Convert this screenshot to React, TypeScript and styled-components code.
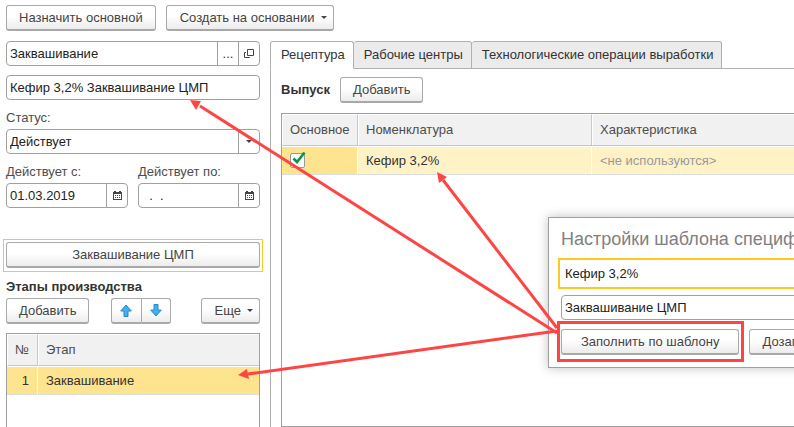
import React from 'react';
import styled, { createGlobalStyle, css } from 'styled-components';

const GlobalStyle = createGlobalStyle`
  *, *::before, *::after { box-sizing: border-box; }
  body {
    margin: 0;
    background: #fff;
    color: #333;
    font: 13px/16px "Liberation Sans", Arial, sans-serif;
  }
  button, input, select { font: inherit; color: inherit; margin: 0; }
`;

const line = '#a0a0a0';

const Page = styled.main`
  position: relative;
  display: flex;
  flex-direction: column;
  gap: 10px;
  min-height: 100vh;
  padding-top: 5px;
  overflow: hidden;
`;

const CommandBar = styled.div`
  display: flex;
  gap: 10px;
  padding-left: 6px;
`;

const Button = styled.button<{ $wide?: boolean; $menu?: boolean }>`
  display: inline-flex;
  align-items: center;
  justify-content: center;
  gap: 6px;
  height: 26px;
  padding: ${(p) => (p.$menu ? '0 6px 0 13px' : '0 12px')};
  width: ${(p) => (p.$wide ? '100%' : 'auto')};
  border: 1px solid #aaa;
  border-bottom: 2px solid #a8a8a8;
  border-radius: 3px;
  background: linear-gradient(#fff 45%, #ececec);
  color: #444;
  white-space: nowrap;
`;

const Caret = styled.span`
  border: 3px solid transparent;
  border-top-color: #444;
  border-bottom: 0;
`;

const Columns = styled.div`
  flex: 1;
  display: flex;
  gap: 10px;
  padding-left: 6px;
`;

const Side = styled.section`
  flex: 0 0 254px;
  display: flex;
  flex-direction: column;
`;

const Fields = styled.div`
  display: flex;
  flex-direction: column;
  gap: 9px;
`;

const Field = styled.div<{ $active?: boolean }>`
  display: flex;
  height: 25px;
  border: 1px solid ${line};
  border-radius: 4px;
  background: #fff;
  overflow: hidden;
  ${(p) =>
    p.$active &&
    css`
      height: 31px;
      margin-left: -3px;
      border: 2px solid #fbc91f;
      border-radius: 0;
      padding-left: 2px;
    `}
`;

const inputText = css`
  flex: 1;
  min-width: 0;
  width: 100%;
  padding: 0 3px;
  border: 0;
  background: transparent;
  color: #222;
  outline: 0;
`;

const Input = styled.input`
  ${inputText}
`;

const Select = styled.select`
  ${inputText}
  appearance: none;
`;

const FieldButton = styled.button`
  flex: 0 0 21px;
  display: flex;
  align-items: center;
  justify-content: center;
  padding: 0;
  border: 0;
  border-left: 1px solid ${line};
  background: transparent;
`;

const Group = styled.div`
  display: flex;
  flex-direction: column;
  gap: 3px;
  min-width: 0;
`;

const Label = styled.label`
  display: block;
  height: 17px;
  padding-top: 1px;
  color: #4d4d4d;
`;

const Dates = styled.div`
  display: grid;
  grid-template-columns: 122px 1fr;
  gap: 10px;
`;

const Template = styled.div`
  margin: 31px -3px 7px;
  padding: 2px 2px 3px;
  border: 1px solid #fbc91f;
`;

const Heading = styled.h2`
  margin: 0;
  font-size: 13px;
  line-height: 16px;
  font-weight: bold;
`;

const StageBar = styled.div`
  display: flex;
  justify-content: space-between;
  margin: 3px 0 9px;
`;

const ArrowPair = styled.div`
  display: flex;
  margin-right: 9px;
`;

const ArrowButton = styled(Button)`
  width: 30px;
  padding: 0;
  &:first-child { border-radius: 3px 0 0 3px; border-right-width: 0; }
  &:last-child { border-radius: 0 3px 3px 0; }
`;

const Grid = styled.div<{ $open?: boolean }>`
  flex: 1;
  border: 1px solid ${line};
  ${(p) => (p.$open ? 'border-bottom: 0;' : 'border-right: 0;')}
`;

const Table = styled.table`
  width: 100%;
  table-layout: fixed;
  border-collapse: separate;
  border-spacing: 0;
`;

const Th = styled.th<{ $width?: number }>`
  width: ${(p) => (p.$width ? `${p.$width}px` : 'auto')};
  height: 32px;
  padding: 0 0 1px 7px;
  border: 1px solid #fff;
  border-right-color: #c8c8c8;
  border-bottom: 1px solid #c6c6c6;
  background: #f1f1f1;
  background-clip: padding-box;
  color: #4d4d4d;
  font-weight: normal;
  text-align: left;
  &:last-child { border-right: 0; }
`;

const Td = styled.td<{ $tone: 'strong' | 'soft'; $muted?: boolean; $right?: boolean }>`
  height: 29px;
  padding: ${(p) => (p.$right ? '0 8px 0 0' : '0 0 0 8px')};
  text-align: ${(p) => (p.$right ? 'right' : 'left')};
  border-top: 1px solid #fff;
  border-right: 1px solid #fff;
  border-bottom: 1px solid #ddd;
  background: ${(p) => (p.$tone === 'strong' ? '#ffe48f' : '#fff2c7')};
  background-clip: padding-box;
  color: ${(p) => (p.$muted ? '#999' : '#333')};
  &:last-child { border-right: 0; }
`;

const Check = styled.label`
  position: relative;
  display: block;
  width: 15px;
  height: 15px;
  input {
    display: block;
    width: 15px;
    height: 15px;
    appearance: none;
    border: 1px solid #999;
    border-radius: 2px;
    background: #fff;
  }
  svg { position: absolute; left: 1px; top: -2px; }
`;

const Work = styled.section`
  flex: 1;
  min-width: 0;
  display: flex;
  flex-direction: column;
`;

const Tabs = styled.div`
  display: flex;
  &::after {
    content: '';
    flex: 1;
    border-bottom: 1px solid #b0b0b0;
  }
`;

const Tab = styled.button<{ $selected?: boolean }>`
  height: 28px;
  padding: 0 8px 0 10px;
  border: 1px solid #b0b0b0;
  border-left-width: ${(p) => (p.$selected ? '1px' : '0')};
  border-bottom-color: ${(p) => (p.$selected ? '#fff' : '#b0b0b0')};
  border-radius: 3px 3px 0 0;
  background: ${(p) => (p.$selected ? '#fff' : '#ebebeb')};
  white-space: nowrap;
`;

const Panel = styled.div`
  flex: 1;
  display: flex;
  flex-direction: column;
  gap: 10px;
  padding: 8px 0 0 10px;
  border-left: 1px solid #b0b0b0;
`;

const PanelBar = styled.div`
  display: flex;
  align-items: center;
  gap: 10px;
`;

const Dialog = styled.section`
  position: absolute;
  left: 548px;
  right: -60px;
  top: 217px;
  display: flex;
  flex-direction: column;
  padding: 9px 12px 12px;
  border: 1px solid ${line};
  background: #fff;
  box-shadow: 0 0 10px rgba(0, 0, 0, 0.25);
`;

const DialogTitle = styled.h1`
  margin: 0 0 7px;
  font-size: 18px;
  line-height: 24px;
  font-weight: normal;
  color: #808080;
  white-space: nowrap;
`;

const DialogFields = styled.div`
  display: flex;
  flex-direction: column;
  gap: 6px;
`;

const DialogButtons = styled.div`
  display: flex;
  gap: 10px;
  margin-top: 9px;
`;

const Marked = styled.div`
  position: relative;
  &::after {
    content: '';
    position: absolute;
    inset: -8px -5px -7px -4px;
    border: 3px solid #ff4444;
    pointer-events: none;
  }
  button { padding: 0 19px; }
`;

const Callouts = styled.svg`
  position: absolute;
  left: 0;
  top: 0;
  pointer-events: none;
`;

const OpenIcon = () => (
  <svg width="10" height="10" viewBox="0 0 10 10" fill="none" stroke="#444">
    <path d="M3.5 .5h6v6h-6z" />
    <path d="M2 3.5H.5v5h5V8" />
  </svg>
);

const CalendarIcon = () => (
  <svg width="9" height="9" viewBox="0 0 9 9">
    <path fill="#444" d="M0 1h1V0h2v1h3V0h2v1h1v8H0z" />
    <path fill="#fff" d="M1 3h7v5H1z" />
    <path stroke="#444" strokeDasharray="1 1" d="M2 4.500h5M2 6.500h5" />
  </svg>
);

const ArrowIcon = ({ down }: { down?: boolean }) => (
  <svg width="12" height="13" viewBox="0 0 12 13">
    <path
      d={down ? 'M4 .5h4v5.500h3.300L6 12 .7 6H4z' : 'M4 12.500h4V7h3.300L6 1 .7 7H4z'}
      fill="#42b0f0"
      stroke="#2788c8"
    />
  </svg>
);

const CheckIcon = () => (
  <svg width="15" height="14" viewBox="0 0 15 14">
    <path d="M2.500 7.500 6 11 13.500 1.500" fill="none" stroke="#0a9648" strokeWidth="2.600" />
  </svg>
);

const DateField = ({ id, label, value }: { id: string; label: string; value: string }) => (
  <Group>
    <Label htmlFor={id}>{label}</Label>
    <Field>
      <Input id={id} defaultValue={value} />
      <FieldButton aria-label="Календарь"><CalendarIcon /></FieldButton>
    </Field>
  </Group>
);

const arrows = [
  { line: 'M557 333 200 106', head: 'M190 100 201 101 196 110z' },
  { line: 'M557 328 443 180', head: 'M437 172 447 177 439 183z' },
  { line: 'M557 331 248 374', head: 'M238 375 247 369 249 379z' },
];

export default function App() {
  return (
    <Page>
      <GlobalStyle />
      <CommandBar>
        <Button>Назначить основной</Button>
        <Button $menu>Создать на основании <Caret /></Button>
      </CommandBar>

      <Columns>
        <Side>
          <Fields>
            <Field>
              <Input aria-label="Вид этапа" defaultValue="Заквашивание" />
              <FieldButton aria-label="Выбрать">...</FieldButton>
              <FieldButton aria-label="Открыть"><OpenIcon /></FieldButton>
            </Field>
            <Field>
              <Input aria-label="Наименование" defaultValue="Кефир 3,2% Заквашивание ЦМП" />
            </Field>
            <Group>
              <Label htmlFor="status">Статус:</Label>
              <Field>
                <Select id="status"><option>Действует</option></Select>
                <FieldButton aria-label="Раскрыть список"><Caret /></FieldButton>
              </Field>
            </Group>
            <Dates>
              <DateField id="from" label="Действует с:" value="01.03.2019" />
              <DateField id="to" label="Действует по:" value="  .  ." />
            </Dates>
          </Fields>

          <Template><Button $wide>Заквашивание ЦМП</Button></Template>

          <Heading>Этапы производства</Heading>
          <StageBar>
            <Button>Добавить</Button>
            <ArrowPair>
              <ArrowButton aria-label="Вверх"><ArrowIcon /></ArrowButton>
              <ArrowButton aria-label="Вниз"><ArrowIcon down /></ArrowButton>
            </ArrowPair>
            <Button $menu>Еще <Caret /></Button>
          </StageBar>
          <Grid $open>
            <Table>
              <thead>
                <tr><Th $width={31}>№</Th><Th>Этап</Th></tr>
              </thead>
              <tbody>
                <tr><Td $tone="strong" $right>1</Td><Td $tone="strong">Заквашивание</Td></tr>
              </tbody>
            </Table>
          </Grid>
        </Side>

        <Work>
          <Tabs role="tablist">
            <Tab role="tab" aria-selected $selected>Рецептура</Tab>
            <Tab role="tab">Рабочие центры</Tab>
            <Tab role="tab">Технологические операции выработки</Tab>
          </Tabs>
          <Panel>
            <PanelBar>
              <Heading>Выпуск</Heading>
              <Button>Добавить</Button>
            </PanelBar>
            <Grid>
              <Table>
                <thead>
                  <tr>
                    <Th $width={76}>Основное</Th>
                    <Th $width={234}>Номенклатура</Th>
                    <Th>Характеристика</Th>
                  </tr>
                </thead>
                <tbody>
                  <tr>
                    <Td $tone="strong">
                      <Check><input type="checkbox" aria-label="Основное" defaultChecked /><CheckIcon /></Check>
                    </Td>
                    <Td $tone="soft">Кефир 3,2%</Td>
                    <Td $tone="soft" $muted>&lt;не используются&gt;</Td>
                  </tr>
                </tbody>
              </Table>
            </Grid>
          </Panel>
        </Work>
      </Columns>

      <Dialog role="dialog" aria-labelledby="dialog-title">
        <DialogTitle id="dialog-title">Настройки шаблона спецификации</DialogTitle>
        <DialogFields>
          <Field $active><Input aria-label="Продукция" defaultValue="Кефир 3,2%" /></Field>
          <Field><Input aria-label="Этап" defaultValue="Заквашивание ЦМП" /></Field>
        </DialogFields>
        <DialogButtons>
          <Marked><Button>Заполнить по шаблону</Button></Marked>
          <Button>Дозаполнить по шаблону</Button>
        </DialogButtons>
      </Dialog>

      <Callouts width="794" height="427" viewBox="0 0 794 427">
        {arrows.map((a) => (
          <g key={a.line}>
            <path d={a.line} stroke="#ff4444" strokeWidth="3" />
            <path d={a.head} fill="#ff4444" />
          </g>
        ))}
      </Callouts>
    </Page>
  );
}
